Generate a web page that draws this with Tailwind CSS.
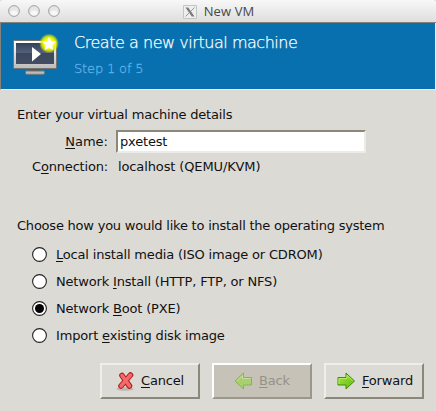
<!DOCTYPE html>
<html lang="en">
<head>
<meta charset="utf-8">
<title>New VM</title>
<script src="https://cdn.jsdelivr.net/npm/@tailwindcss/browser@4"></script>
</head>
<body class="w-[436px] h-[411px] overflow-hidden bg-[#dcdad5] text-[#111] text-[13px] leading-[18px] tracking-[-0.18px] font-['DejaVu_Sans',sans-serif] flex flex-col [&_u]:underline [&_u]:decoration-1 [&_u]:underline-offset-2 [&_u]:[text-decoration-skip-ink:none]">
<header class="relative h-[23px] shrink-0 bg-linear-to-b from-[#f8f8f8] to-[#dedede] border-b border-[#85827c] flex items-center justify-center gap-[7px] pl-px rounded-t-[3px]">
  <div class="absolute left-2 top-[5px] flex gap-2">
    <svg class="size-3" viewBox="0 0 12 12"><circle cx="6" cy="6" r="5.4" fill="#e6e6e6" stroke="#a2a2a2"/><ellipse cx="6" cy="8" rx="3.5" ry="2.4" fill="#f8f8f8"/></svg>
    <svg class="size-3" viewBox="0 0 12 12"><circle cx="6" cy="6" r="5.4" fill="#e6e6e6" stroke="#a2a2a2"/><ellipse cx="6" cy="8" rx="3.5" ry="2.4" fill="#f8f8f8"/></svg>
    <svg class="size-3" viewBox="0 0 12 12"><circle cx="6" cy="6" r="5.4" fill="#e6e6e6" stroke="#a2a2a2"/><ellipse cx="6" cy="8" rx="3.5" ry="2.4" fill="#f8f8f8"/></svg>
  </div>
  <svg class="w-[14px] h-[14px] mt-px" viewBox="0 0 14 14"><path d="M.5.5h13v13H.5z" fill="#eee" stroke="#c4c4c4"/><path d="M2.500 2.500h2.700l6.300 9H8.800z" fill="#777"/><path d="M11.500 2.500 2.500 11.500" stroke="#8b8b8b" stroke-width=".9"/></svg>
  <h1 class="font-['Open_Sans',sans-serif] text-[13px] tracking-[0.1px] text-[#484848]">New VM</h1>
</header>
<section class="h-[67px] shrink-0 bg-[#0870ae] border-l border-r border-l-[#85827c] border-r-[#eeebe7] border-b border-b-[#eeebe7] flex">
  <svg class="w-[48px] h-[48px] ml-[11px] mt-[8px]" viewBox="12 31 48 48">
    <defs>
      <linearGradient id="screen" x1="0" y1="0" x2="0" y2="1"><stop stop-color="#34405a"/><stop offset=".45" stop-color="#536077"/><stop offset=".5" stop-color="#3d475e"/><stop offset="1" stop-color="#424d64"/></linearGradient>
      <linearGradient id="bezel" x1="0" y1="0" x2="0" y2="1"><stop stop-color="#fff"/><stop offset="1" stop-color="#bcbcbc"/></linearGradient>
      <radialGradient id="glow"><stop offset=".5" stop-color="#fcff00"/><stop offset=".75" stop-color="#dff000" stop-opacity=".8"/><stop offset="1" stop-color="#b5dc20" stop-opacity="0"/></radialGradient>
    </defs>
    <path d="M30 68h10v3H30z" fill="#555"/>
    <rect x="25.500" y="71" width="19" height="3.300" rx="1" fill="#bbb" stroke="#777"/>
    <rect x="13.500" y="40.500" width="43" height="28" rx="1" fill="url(#bezel)" stroke="#77746e"/>
    <path d="M16 43h38v21H16z" fill="url(#screen)"/>
    <path d="M32 47v14.500L41 54z" fill="#fff"/>
    <circle cx="49" cy="43.500" r="10" fill="url(#glow)"/>
    <path d="m49 37.500 1.900 4 4.300.6-3.200 3 .9 4.400-3.900-2.100-3.900 2.100.9-4.400-3.200-3 4.300-.6z" fill="#fff" stroke="#fff" stroke-width=".7" stroke-linejoin="round"/>
  </svg>
  <div class="ml-[14px] pt-[9px] font-extralight">
    <h2 class="text-[16px] leading-[22px] tracking-[-0.46px] text-white whitespace-nowrap [-webkit-text-stroke:0.25px]">Create a new virtual machine</h2>
    <p class="mt-[6px] leading-[18px] tracking-[-0.15px] text-[#5cb0ea] [-webkit-text-stroke:0.3px]">Step 1 of 5</p>
  </div>
</section>
<main class="pl-[17px] pt-[16px] whitespace-nowrap">
  <p>Enter your virtual machine details</p>
  <div class="mt-[6px] flex items-center h-[23px]">
    <label for="vm-name" class="w-[91px] text-right tracking-normal"><u>N</u>ame:</label>
    <input id="vm-name" value="pxetest" class="ml-[8px] w-[250px] h-[23px] bg-white border-2 border-t-[#8c877b] border-l-[#8c877b] border-r-[#edebe7] border-b-[#edebe7] pl-[2px] leading-[18px] outline-none">
  </div>
  <div class="mt-[5px] flex"><span class="w-[91px] text-right">C<u>o</u>nnection:</span><span class="ml-[10px] tracking-[-0.12px]">localhost (QEMU/KVM)</span></div>
  <p class="mt-[41px] tracking-[-0.22px]">Choose how you would like to install the operating system</p>
  <div class="pl-[15px] pt-[11px] flex flex-col gap-[9px]">
    <label class="flex items-center gap-[9px]"><svg class="size-[15px] -mt-0.5" viewBox="0 0 15 15"><circle cx="7.500" cy="7.500" r="6.900" fill="#fff" stroke="#222" stroke-width="1.100"/></svg><span><u>L</u>ocal install media (ISO image or CDROM)</span></label>
    <label class="flex items-center gap-[9px]"><svg class="size-[15px] -mt-0.5" viewBox="0 0 15 15"><circle cx="7.500" cy="7.500" r="6.900" fill="#fff" stroke="#222" stroke-width="1.100"/></svg><span>Network <u>I</u>nstall (HTTP, FTP, or NFS)</span></label>
    <label class="flex items-center gap-[9px]"><svg class="size-[15px] -mt-0.5" viewBox="0 0 15 15"><circle cx="7.500" cy="7.500" r="6.900" fill="#fff" stroke="#222" stroke-width="1.100"/><circle cx="7.500" cy="7.500" r="4.500"/></svg><span>Network <u>B</u>oot (PXE)</span></label>
    <label class="flex items-center gap-[9px]"><svg class="size-[15px] -mt-0.5" viewBox="0 0 15 15"><circle cx="7.500" cy="7.500" r="6.900" fill="#fff" stroke="#222" stroke-width="1.100"/></svg><span>Import <u>e</u>xisting disk image</span></label>
  </div>
</main>
<footer class="mt-auto mb-[12px] pl-[100px] flex gap-[12px]">
  <button class="w-[100px] h-[36px] border-2 border-t-[#f0eeea] border-l-[#f0eeea] border-r-[#8c877b] border-b-[#8c877b] flex items-center pl-[14px] gap-[5px]">
    <svg class="size-5" viewBox="0 0 20 20"><ellipse cx="9" cy="18" rx="8.500" ry="1.800" fill="#000" fill-opacity=".16"/><path d="M6 4.500 9.500 9.500M13.500 15 9.500 9.500M14.500 4 5 15" stroke="#b51c1c" stroke-width="5.600" stroke-linecap="round"/><path d="M6 4.500 13.500 15M14.500 4 5 15" stroke="#f26b6b" stroke-width="3.500" stroke-linecap="round"/></svg>
    <span><u>C</u>ancel</span>
  </button>
  <button class="w-[100px] h-[36px] bg-[#c6c2b8] border-2 border-t-white border-l-white border-r-[#9c978b] border-b-[#9c978b] text-[#969286] flex items-center pl-[19px] gap-[6px]">
    <svg class="size-5" viewBox="0 0 20 20"><path d="M2 10 10.500 2v4.500H18.500v7.500H10.500V18z" fill="#a8d070" stroke="#86b356" stroke-linejoin="round"/><path d="M3.700 10 9.500 4.500v3h8" fill="none" stroke="#c6df9f"/></svg>
    <span><u>B</u>ack</span>
  </button>
  <button class="w-[100px] h-[36px] border-2 border-t-[#f0eeea] border-l-[#f0eeea] border-r-[#8c877b] border-b-[#8c877b] flex items-center pl-[10px] gap-[6px]">
    <svg class="size-5" viewBox="0 0 20 20"><defs><linearGradient id="go" x1="0" y1="0" x2="1" y2="1"><stop stop-color="#a0e840"/><stop offset="1" stop-color="#64b90e"/></linearGradient></defs><path d="M18.500 10 10 2v4.500H2v7.500h8V18z" fill="url(#go)" stroke="#438a08" stroke-linejoin="round"/><path d="M3 13V7.500h8V4.300L16.800 10" fill="none" stroke="#b5ef62"/></svg>
    <span><u>F</u>orward</span>
  </button>
</footer>
</body>
</html>
